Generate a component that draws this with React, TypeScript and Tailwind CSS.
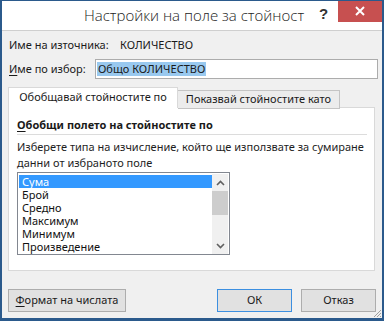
import React from "react";

const items = ["Сума", "Брой", "Средно", "Максимум", "Минимум", "Произведение"];

export default function App() {
  return (
    <div className="w-[384px] h-[321px] bg-[#f0f0f0] border-[#2b5a8c] border-l-2 border-r-2 border-b-[3px] border-t flex flex-col font-['Noto_Sans',sans-serif] text-[11px] text-[#1a1a1a] relative overflow-hidden">
      {/* title bar */}
      <div className="h-[30px] bg-white border-b border-[#cfcfcf] relative flex items-center justify-center shrink-0">
        <span className="font-['Open_Sans',sans-serif] font-light text-[15px] text-[#222] -mt-[1px] ml-[4px]">
          Настройки на поле за стойност
        </span>
        <span className="absolute left-[317px] top-[2px] font-['Liberation_Sans',sans-serif] font-bold text-[15px] text-[#333]">?</span>
        <div className="absolute right-0 top-[-1px] w-[44px] h-[22px] bg-[#c75050] flex items-center justify-center">
          <svg width="10" height="10" viewBox="0 0 10 10">
            <path d="M1 1 L9 9 M9 1 L1 9" stroke="white" strokeWidth="2" />
          </svg>
        </div>
      </div>

      {/* body */}
      <div className="flex flex-col pl-[6px] pr-[4px]">
        <div className="mt-[4px] h-[20px] flex items-center pl-[1px]">
          <span className="w-[111px] shrink-0">Име на източника:</span>
          <span>КОЛИЧЕСТВО</span>
        </div>
        <div className="mt-[4px] h-[20px] flex items-center pl-[1px]">
          <span className="w-[86px] shrink-0">
            <span className="underline underline-offset-2">И</span>ме по избор:
          </span>
          <div className="w-[284px] h-[20px] bg-white border border-[#acacac] flex items-center pl-[1px]">
            <span className="bg-[#99c9ef] h-[14px] leading-[14px] px-[1px]">Общо КОЛИЧЕСТВО</span>
          </div>
        </div>

        {/* tabs */}
        <div className="mt-[8px] flex items-end h-[21px] relative z-10">
          <div className="w-[170px] h-[21px] bg-white border border-b-0 border-[#d9d9d9] flex items-center justify-center pb-[1px]">
            Обобщавай стойностите по
          </div>
          <div className="w-[162px] h-[19px] bg-[#ececec] border border-l-0 border-[#c4c4c4] flex items-center justify-center -mb-[1px]">
            Показвай стойностите като
          </div>
        </div>
        <div className="w-[367px] h-[164px] bg-white border border-[#d9d9d9] -mt-[1px] pl-[8px] pr-[6px] pt-[8px] flex flex-col">
          <div className="font-bold h-[17px] leading-[17px]">
            <span className="underline underline-offset-2">О</span>бобщи полето на стойностите по
          </div>
          <div className="h-px bg-[#dcdcdc] mt-[1px] w-[350px]" />
          <div className="mt-[4px] leading-[16px] text-[#1e1e1e] whitespace-nowrap">
            Изберете типа на изчисление, който ще използвате за сумиране
            <br />
            данни от избраното поле
          </div>
          <div className="mt-[1px] w-[213px] h-[83px] border border-[#828790] bg-white flex">
            <div className="flex-1 pl-[1px] pt-[2px] flex flex-col">
              {items.map((t, i) => (
                <div
                  key={t}
                  className={
                    "h-[13px] leading-[13px] pl-[3px] " +
                    (i === 0 ? "bg-[#3399ff] text-white" : "text-[#111]")
                  }
                >
                  {t}
                </div>
              ))}
            </div>
            <div className="w-[16px] mr-[1px] mt-[1px] bg-[#f0f0f0] flex flex-col items-center">
              <div className="h-[17px] flex items-center justify-center">
                <svg width="9" height="6" viewBox="0 0 9 6">
                  <path d="M1 5 L4.5 1.5 L8 5" stroke="#606060" strokeWidth="1.6" fill="none" />
                </svg>
              </div>
              <div className="w-[16px] h-[24px] bg-[#cdcdcd]" />
              <div className="flex-1" />
              <div className="h-[17px] flex items-center justify-center">
                <svg width="9" height="6" viewBox="0 0 9 6">
                  <path d="M1 1 L4.5 4.5 L8 1" stroke="#606060" strokeWidth="1.6" fill="none" />
                </svg>
              </div>
            </div>
          </div>
        </div>

        {/* buttons */}
        <div className="mt-[18px] flex items-center">
          <div className="w-[118px] h-[23px] bg-[#e1e1e1] border border-[#adadad] flex items-center justify-center">
            <span>
              <span className="underline underline-offset-2">Ф</span>ормат на числата
            </span>
          </div>
          <div className="ml-[91px] w-[75px] h-[23px] bg-[#e1e1e1] border border-[#3c8fe0] flex items-center justify-center">
            ОК
          </div>
          <div className="ml-[9px] w-[75px] h-[23px] bg-[#e1e1e1] border border-[#adadad] flex items-center justify-center">
            Отказ
          </div>
        </div>
      </div>

      {/* resize grip */}
      <svg className="absolute right-0 bottom-0" width="10" height="10" viewBox="0 0 10 10">
        <path d="M9 2 L2 9 M9 5 L5 9 M9 8 L8 9" stroke="#a0a0a0" strokeWidth="1" />
      </svg>
    </div>
  );
}
